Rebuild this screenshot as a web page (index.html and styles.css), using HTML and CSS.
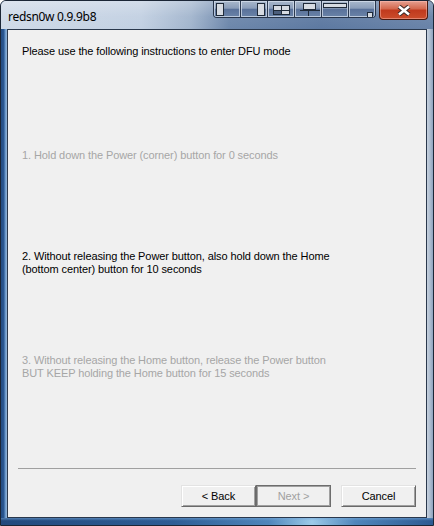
FILE: index.html
```html
<!DOCTYPE html>
<html>
<head>
<meta charset="utf-8">
<link rel="stylesheet" href="styles.css">
</head>
<body>
<div class="window">
  <div class="titlebar">
    <div class="title">redsn0w 0.9.9b8</div>
    <div class="tb-group">
      <div class="tb-btn"><svg width="26" height="16" viewBox="0 0 26 16"><rect class="ic" x="2.5" y="2.5" width="7" height="12"/></svg></div>
      <div class="tb-btn"><svg width="26" height="16" viewBox="0 0 26 16"><rect class="ic" x="16.5" y="2.5" width="7" height="12"/></svg></div>
      <div class="tb-btn"><svg width="26" height="16" viewBox="0 0 26 16"><rect class="ic-dark" x="5.5" y="4.5" width="16" height="9"/><rect class="ic-fill" x="6" y="5" width="7" height="4"/><rect class="ic-fill" x="14" y="5" width="7" height="4"/><rect class="ic-fill" x="14" y="10" width="7" height="3"/><line class="ic-line" x1="13.5" y1="4.5" x2="13.5" y2="13.5"/><line class="ic-line" x1="5.5" y1="9.5" x2="21.5" y2="9.5"/></svg></div>
      <div class="tb-btn"><svg width="26" height="16" viewBox="0 0 26 16"><rect class="ic" x="8.5" y="2.5" width="12" height="6"/><line class="ic-line" x1="5" y1="9.5" x2="25" y2="9.5"/><line class="ic-line" x1="13.5" y1="9.5" x2="13.5" y2="15"/></svg></div>
      <div class="tb-btn"><svg width="26" height="16" viewBox="0 0 26 16"><rect class="ic" x="1.5" y="2.5" width="23" height="4"/></svg></div>
      <div class="tb-btn"><svg width="26" height="16" viewBox="0 0 26 16"><rect class="ic" x="18.5" y="11.5" width="5" height="5"/></svg></div>
    </div>
    <div class="close"><svg width="16" height="11" viewBox="0 0 16 11"><path class="x-out" d="M3 1.5 L13 9.5 M13 1.5 L3 9.5"/><path class="x-in" d="M3 1.5 L13 9.5 M13 1.5 L3 9.5"/></svg></div>
  </div>
  <div class="middle">
    <div class="frame-left"></div>
    <div class="client">
      <div class="content">
        <p class="line intro">Please use the following instructions to enter DFU mode</p>
        <p class="line step step1 disabled">1. Hold down the Power (corner) button for 0 seconds</p>
        <p class="line step step2">2. Without releasing the Power button, also hold down the Home<br>(bottom center) button for 10 seconds</p>
        <p class="line step step3 disabled">3. Without releasing the Home button, release the Power button<br>BUT KEEP holding the Home button for 15 seconds</p>
      </div>
      <div class="footer">
        <div class="sep"></div>
        <div class="buttons">
          <div class="btn">&lt; Back</div>
          <div class="btn btn-default disabled">Next &gt;</div>
          <div class="btn btn-cancel">Cancel</div>
        </div>
      </div>
    </div>
    <div class="frame-right"></div>
  </div>
  <div class="frame-bottom"></div>
</div>
</body>
</html>
```
FILE: styles.css
```css
html, body {
  margin: 0;
  padding: 0;
  background: #ffffff;
}
.window {
  box-sizing: border-box;
  width: 434px;
  height: 526px;
  border: 1px solid #1b2636;
  border-radius: 6px 6px 0 0;
  display: flex;
  flex-direction: column;
  overflow: hidden;
  background: #6a84a8;
}
.titlebar {
  height: 28px;
  display: flex;
  align-items: flex-start;
  background:
    linear-gradient(to bottom, rgba(255,255,255,0.28), rgba(255,255,255,0.05) 55%, rgba(255,255,255,0) 100%),
    linear-gradient(to right, #cfdae8 0, #c2d0e2 140px, #a2b5cd 190px, #6d87ab 228px, #5d79a1 320px, #6983a8 100%);
}
.title {
  font-family: "Noto Sans", "Open Sans", sans-serif;
  font-size: 12px;
  letter-spacing: -0.3px;
  color: #000;
  padding: 7px 0 0 7px;
  line-height: 17px;
}
.tb-group {
  margin-left: auto;
  height: 17px;
  box-sizing: border-box;
  width: 163px;
  display: flex;
  border: 1px solid #27354b;
  border-top: none;
  border-radius: 0 0 4px 4px;
  overflow: hidden;
}
.tb-btn {
  flex: 1;
  height: 16px;
  border-right: 1px solid #2c3a50;
  box-shadow: inset 0 0 0 1px rgba(214,223,236,0.75);
  background: linear-gradient(to bottom, #a9b8cc 0, #8a9db9 45%, #5a729a 52%, #6a83a8 100%);
  overflow: hidden;
}
.tb-btn:last-child {
  border-right: none;
}
.tb-btn svg {
  display: block;
}
.ic {
  fill: #d6dbe2;
  stroke: #1f2a39;
  stroke-width: 1;
}
.ic-dark {
  fill: #4b5e7c;
  stroke: #1f2a39;
  stroke-width: 1;
}
.ic-fill {
  fill: #d6dbe2;
}
.ic-line {
  stroke: #1f2a39;
  stroke-width: 1;
}
.close {
  margin-left: 3px;
  margin-right: 5px;
  width: 49px;
  height: 19px;
  box-sizing: border-box;
  border: 1px solid #4a1a10;
  border-top: none;
  border-radius: 0 0 4px 4px;
  background: linear-gradient(to bottom, #e6a090 0, #d46a50 42%, #c03a1e 52%, #cb4d2c 100%);
  box-shadow: inset 0 0 0 1px rgba(255,200,190,0.45);
  display: flex;
  align-items: center;
  justify-content: center;
}
.close svg {
  display: block;
}
.x-out {
  stroke: #3b2a28;
  stroke-width: 4.6;
  fill: none;
}
.x-in {
  stroke: #ffffff;
  stroke-width: 2.6;
  fill: none;
}
.middle {
  flex: 1;
  display: flex;
}
.frame-left {
  width: 6px;
  background: linear-gradient(to right, #234c83 0, #2a5791 50%, #5f8fc4 66%, #93b5d9 100%);
}
.frame-right {
  width: 6px;
  background: linear-gradient(to right, #c6d1de 0, #aebdd0 50%, #8ea3bf 100%);
}
.frame-bottom {
  height: 7px;
  background:
    linear-gradient(to bottom, rgba(120,170,220,0.55) 0, rgba(0,0,0,0) 40%),
    linear-gradient(to right, #22497d 0, #2e5d95 40%, #4f86bb 62%, #9ccbe9 72%, #4f86bb 82%, #2d5a92 100%);
}
.client {
  flex: 1;
  display: flex;
  flex-direction: column;
  border: 1px solid #2a384c;
  background: #f0f0f0;
  font-family: "Liberation Sans", Arial, sans-serif;
  font-size: 11px;
  letter-spacing: -0.1px;
  color: #000;
}
.content {
  padding: 15px 14px 0 14px;
}
.line {
  margin: 0;
  line-height: 13px;
}
.step1 {
  margin-top: 91px;
}
.step2 {
  margin-top: 88px;
}
.step3 {
  margin-top: 78px;
}
.disabled {
  color: #a6a6a6;
}
.footer {
  margin-top: auto;
  padding: 0 0 10px 0;
}
.sep {
  height: 1px;
  margin: 0 10px;
  background: #a0a0a0;
}
.buttons {
  margin-top: 16px;
  display: flex;
  justify-content: flex-end;
  padding-right: 10px;
}
.btn {
  box-sizing: border-box;
  width: 75px;
  height: 22px;
  display: flex;
  align-items: center;
  justify-content: center;
  background: #f0f0f0;
  border: 1px solid;
  border-color: #e3e3e3 #696969 #696969 #e3e3e3;
  box-shadow: inset 1px 1px #ffffff, inset -1px -1px #a0a0a0;
  color: #000;
}
.btn-default {
  border: 1px solid #6d6d6d;
  box-shadow: inset 0 0 0 1px #a0a0a0;
  color: #a0a0a0;
}
.btn-cancel {
  margin-left: 10px;
}
```
